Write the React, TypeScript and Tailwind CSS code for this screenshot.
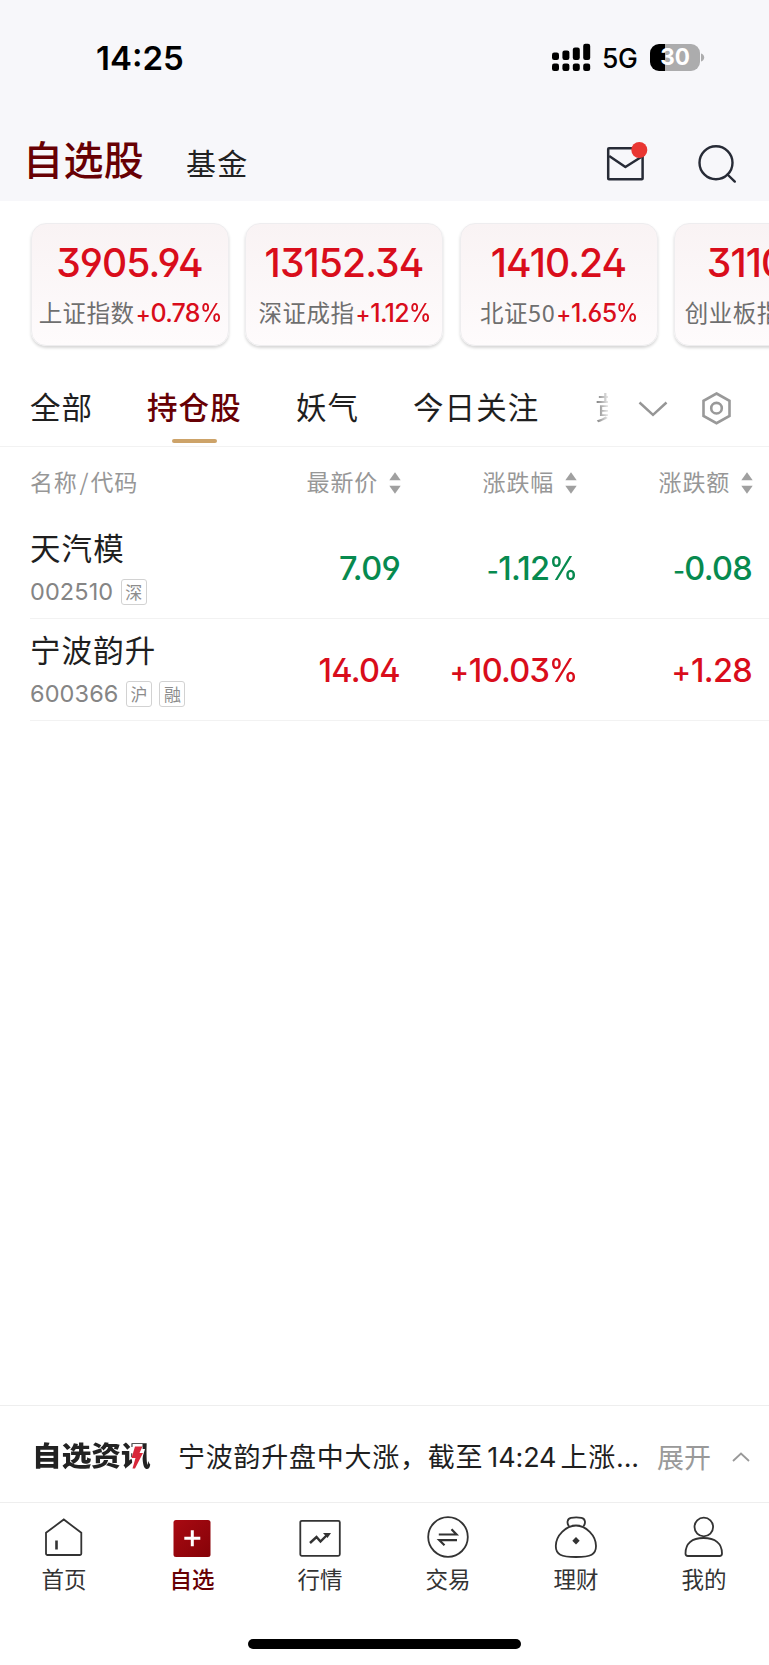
import React from "react";

const indexes = [
  { name: "上证指数", value: "3905.94", change: "+0.78%" },
  { name: "深证成指", value: "13152.34", change: "+1.12%" },
  { name: "北证50", value: "1410.24", change: "+1.65%" },
  { name: "创业板指", value: "3110.57", change: "+1.98%" },
];

const stocks = [
  { name: "天汽模", code: "002510", tags: ["深"], price: "7.09", percent: "-1.12%", diff: "-0.08", up: false },
  { name: "宁波韵升", code: "600366", tags: ["沪", "融"], price: "14.04", percent: "+10.03%", diff: "+1.28", up: true },
];

// rounded digits with a flat-top three and open four / six / nine
const digits = "font-['Inter'] [font-feature-settings:'ss01','cv09']";

// sign and percent mark are set a little narrower than the number itself
function Figure({ text }: { text: string }) {
  const sign = /^[+-]/.test(text) ? text[0] : "";
  const percent = text.endsWith("%") ? "%" : "";
  const number = text.slice(sign.length, text.length - percent.length);
  return (
    <>
      {sign === "-" && <span className="text-[0.8em]">-</span>}
      {sign === "+" && <span className="text-[0.9em] mr-[0.02em]">+</span>}
      {number}
      {percent && <span className="inline-block w-[0.82em] origin-left scale-x-[0.9]">{percent}</span>}
    </>
  );
}

function SortIcon() {
  return (
    <svg className="ml-[11px] mt-[2px] shrink-0" width="12" height="22" viewBox="0 0 12 22" fill="#a0a0a0">
      <path d="M6 0.3L11.7 8.3H0.3z" />
      <path d="M6 21.7L11.7 13.7H0.3z" />
    </svg>
  );
}

function StatusBar() {
  return (
    <div className="h-[116px] flex justify-between pl-[96px] pr-[64px]">
      <div className="mt-[38px] h-10 leading-10 text-[33px] font-semibold text-black font-['Inter']">14:25</div>
      <div className="mt-[43px] h-[29px] flex items-center">
        <svg width="39" height="29" viewBox="0 0 39 29" fill="#000">
          <rect x="0" y="9.5" width="7" height="7.5" rx="2.2" />
          <rect x="10.4" y="7.5" width="7" height="9.5" rx="2.2" />
          <rect x="20.8" y="4.5" width="7" height="12.5" rx="2.2" />
          <rect x="31.2" y="0.8" width="7" height="16.2" rx="2.2" />
          <rect x="0" y="20.5" width="7" height="7.5" rx="2.2" />
          <rect x="10.4" y="20.5" width="7" height="7.5" rx="2.2" />
          <rect x="20.8" y="20.5" width="7" height="7.5" rx="2.2" />
          <rect x="31.2" y="20.5" width="7" height="7.5" rx="2.2" />
        </svg>
        <span className="ml-[11px] w-[38px] pt-[1px] leading-7 text-[26.5px] font-medium text-black font-['Inter'] tracking-[-0.3px]">5G</span>
        <div className="ml-[10px] w-[50px] h-[27px] rounded-[9px] flex items-center justify-center bg-[linear-gradient(to_right,#000_31%,#acacad_31%)]">
          <span className="text-[22.5px] leading-none font-bold text-white font-['Inter']">30</span>
        </div>
        <svg className="ml-[1px]" width="4" height="9" viewBox="0 0 4 9" fill="#acacad">
          <path d="M0 0.5C2 1 3.2 2.6 3.2 4.5S2 8 0 8.5z" />
        </svg>
      </div>
    </div>
  );
}

function Header() {
  return (
    <header className="h-[201px] bg-[#f7f7fa]">
      <StatusBar />
      <div className="h-[85px] flex items-start pl-[23px] whitespace-nowrap">
        <h1 className="mt-[13px] w-[122px] leading-[58px] text-[40px] font-medium text-[#670004] tracking-[0.4px]">自选股</h1>
        <span className="mt-[24px] ml-[41px] leading-[44px] text-[30px] text-[#222] tracking-[1.2px]">基金</span>
        <svg className="mt-[24px] ml-auto overflow-visible" width="44" height="44" viewBox="0 0 44 44" fill="none" stroke="#272b36" strokeWidth="2.5" strokeLinejoin="round">
          <rect x="6.2" y="8.2" width="34.4" height="31" rx="0.8" />
          <path d="M7.2 16L23.4 27L40 16.5" />
          <circle cx="37.3" cy="10" r="8" fill="#e93632" stroke="none" />
        </svg>
        <svg className="mt-[26px] ml-[50px] mr-[29px]" width="44" height="44" viewBox="0 0 44 44" fill="none" stroke="#272b36" strokeWidth="2.4" strokeLinecap="round">
          <circle cx="20" cy="20.7" r="16.5" />
          <path d="M31.5 32.5L38.8 39.6" />
        </svg>
      </div>
    </header>
  );
}

function IndexCards() {
  return (
    <div className="h-[167px] pt-[22px] pl-[30.5px] flex gap-[16.5px] overflow-hidden">
      {indexes.map((item) => (
        <div
          key={item.name}
          className="w-[198px] h-[123px] shrink-0 rounded-[15px] border border-[#eeedef] bg-linear-to-b from-[#f9f3f4] to-[#fefbfc] shadow-[0_2px_3px_rgba(0,0,0,0.16)] text-center whitespace-nowrap"
        >
          <div className={`${digits} mt-[13px] h-[52px] leading-[52px] text-[39px] font-medium text-[#d90d1b] tracking-[-0.9px]`}>{item.value}</div>
          <div className="mt-[6px] h-9 leading-9 flex justify-center items-center text-[23.5px] text-[#6f6f6f] tracking-[0.5px]">
            <span className="-mt-[3px]">{item.name}</span>
            <span className={`${digits} ml-[1px] mt-[1px] text-[25px] font-medium text-[#d90d1b] tracking-[-0.7px]`}>
              <Figure text={item.change} />
            </span>
          </div>
        </div>
      ))}
    </div>
  );
}

function Tabs() {
  return (
    <div className="h-[79px] border-b border-[#f2f2f2] pl-[30px] flex items-start text-[30.5px] leading-[44px] text-[#1f1f1f] tracking-[1.1px] whitespace-nowrap">
      <span className="mt-[16px] w-[117px]">全部</span>
      <div className="mt-[16px] w-[149px]">
        <div className="font-medium text-[#670004]">持仓股</div>
        <div className="ml-[25px] mt-[11px] w-[45px] h-1 rounded-full bg-[#cda369]" />
      </div>
      <span className="mt-[16px] w-[117px]">妖气</span>
      <span className="mt-[16px] w-[182px]">今日关注</span>
      <span className="mt-[16px] w-[13px] overflow-hidden text-transparent bg-clip-text bg-linear-to-r from-[#777] to-[#e8e8e8]">黄金</span>
      <svg className="mt-[32px] ml-[30px]" width="30" height="18" viewBox="0 0 30 18" fill="none" stroke="#969696" strokeWidth="2.5">
        <path d="M1.5 2.5L15 14.8L28.5 2.5" />
      </svg>
      <svg className="mt-[23px] ml-[33px]" width="32" height="34" viewBox="0 0 32 34" fill="none" stroke="#999" strokeWidth="2.6">
        <path d="M15.5 2.5L28.5 9.8V25L15.5 32.2L2.5 25V9.8z" />
        <circle cx="15.5" cy="17.2" r="5.3" />
      </svg>
    </div>
  );
}

function StockTable() {
  return (
    <div className="h-[958px]">
      <div className="h-[69px] mb-[1px] grid grid-cols-[371px_176px_176px] pl-[30px] items-center text-[23px] text-[#979797] tracking-[0.8px]">
        <div className="flex justify-between items-center">
          <span>名称<span className="ml-[2px] mr-[1px]">/</span>代码</span>
          <span className="flex items-center">最新价<SortIcon /></span>
        </div>
        <div className="flex justify-end items-center">涨跌幅<SortIcon /></div>
        <div className="flex justify-end items-center">涨跌额<SortIcon /></div>
      </div>
      {stocks.map((s) => (
        <div
          key={s.code}
          className="ml-[30px] h-[102px] border-b border-[#f2f2f2] grid grid-cols-[200px_170px_176px_176px] items-center"
        >
          <div className="mt-[1px]">
            <div className="leading-[44px] text-[30.5px] text-[#1f1f1f] tracking-[1.1px]">{s.name}</div>
            <div className="h-[42px] pt-[3px] flex items-center">
              <span className="font-['Inter'] text-[23.5px] text-[#858585] tracking-[0.1px]">{s.code}</span>
              {s.tags.map((t) => (
                <span key={t} className="ml-[7.500px] w-[26px] h-[26px] rounded-[3px] border border-[#d2d2d2] flex items-center justify-center text-[17px] leading-none text-[#8c8c8c] pb-[1px]">{t}</span>
              ))}
            </div>
          </div>
          {[s.price, s.percent, s.diff].map((v) => (
            <div
              key={v}
              className={`${digits} pt-[3px] text-right text-[32.5px] font-medium tracking-[-0.7px] ${s.up ? "text-[#d90d1b]" : "text-[#078a4f]"}`}
            >
              <Figure text={v} />
            </div>
          ))}
        </div>
      ))}
    </div>
  );
}

function NewsBar() {
  return (
    <div className="h-[98px] border-y border-[#eeeeee] pl-[32px] flex items-center whitespace-nowrap">
      <div className="relative w-[146px] pt-[2px]">
        <div className="text-[29.7px] leading-[44px] font-black text-[#222] scale-y-[0.93]">自选资讯</div>
        <svg className="absolute left-[98px] top-[10px]" width="15" height="30" viewBox="0 0 15 30">
          <path d="M2.5 3H12.500V8H15L9 28H2z" fill="#fff" />
          <path d="M5 5.500H12.500L9.500 12H13L5 27.500H2.500L5.500 17H1.500z" fill="#d8283a" />
        </svg>
      </div>
      <span className="w-[479px] pt-[5px] text-[27px] leading-10 text-[#1f1f1f] tracking-[0.75px]">
        宁波韵升盘中大涨，截至<span className="font-['Inter'] mx-[4px] tracking-[-0.1px]">14:24</span>上涨<span className="font-['Inter'] tracking-[-0.1px]">...</span>
      </span>
      <span className="pt-[5px] text-[27px] leading-10 text-[#999]">展开</span>
      <svg className="ml-[20px] mt-[5px]" width="20" height="12" viewBox="0 0 20 12" fill="none" stroke="#999" strokeWidth="1.8">
        <path d="M2 10L10 2.5L18 10" />
      </svg>
    </div>
  );
}

const navItems = [
  {
    label: "首页",
    icon: (
      <>
        <path d="M4 16.8L21.8 3.5L39.3 16.8V37.5a1.5 1.5 0 0 1-1.5 1.5H5.5a1.5 1.5 0 0 1-1.5-1.5z" />
        <path d="M14.5 24.5V33.5" strokeWidth="2.6" />
      </>
    ),
  },
  {
    label: "自选",
    active: true,
    icon: (
      <>
        <defs>
          <linearGradient id="nav-red" x1="0" y1="0" x2="1" y2="1">
            <stop offset="0" stopColor="#a90a12" />
            <stop offset="1" stopColor="#850208" />
          </linearGradient>
        </defs>
        <rect x="3.5" y="4" width="37" height="37" rx="2.5" fill="url(#nav-red)" stroke="none" />
        <path d="M22.3 14.3V30.3M14.3 22.3H30.3" stroke="#fff" strokeWidth="3" />
      </>
    ),
  },
  {
    label: "行情",
    icon: (
      <>
        <rect x="2.3" y="4.8" width="39.5" height="35" rx="1.5" />
        <path d="M12 27L18.5 21L22.5 25.5L29.5 18.5" strokeWidth="2.4" />
        <path d="M25 17H33L29.5 22z" fill="#333" stroke="none" />
      </>
    ),
  },
  {
    label: "交易",
    icon: (
      <>
        <circle cx="22" cy="21" r="19.8" />
        <path d="M12.8 18.5H30.5L25.5 13.2M31 24.2H13.3L18.5 29.3" strokeWidth="2.2" />
      </>
    ),
  },
  {
    label: "理财",
    icon: (
      <>
        <path d="M15.2 10.5C12.5 7.5 13 2.5 17 1.8C20.5 1.2 24 1.2 27.5 1.8C31.5 2.5 32 7.5 29.3 10.5" />
        <path d="M22 9.5C32 9.5 42 19.5 42 30C42 38.5 37 41 22 41S1.8 38.5 1.8 30C1.8 19.5 12 9.5 22 9.5z" />
        <path d="M22 21L25.7 24.7L22 28.4L18.3 24.7z" fill="#333" stroke="none" />
      </>
    ),
  },
  {
    label: "我的",
    icon: (
      <>
        <circle cx="21.8" cy="11" r="9.3" />
        <path d="M3.5 37.5C3.5 27.5 10 22 21.5 22S40 27.5 40 37.5C40 39 39 40 37.5 40H6C4.5 40 3.5 39 3.5 37.5z" />
      </>
    ),
  },
];

function BottomNav() {
  return (
    <nav className="h-[136px] w-[768px] grid grid-cols-6">
      {navItems.map((n) => (
        <div key={n.label} className="flex flex-col items-center">
          <svg className="mt-[13px]" width="44" height="44" viewBox="0 0 44 44" fill="none" stroke="#333" strokeWidth="1.8">
            {n.icon}
          </svg>
          <span
            className={
              n.active
                ? "leading-9 text-[22.5px] font-medium text-[#670004]"
                : "leading-9 text-[22.5px] text-[#333]"
            }
          >
            {n.label}
          </span>
        </div>
      ))}
    </nav>
  );
}

export default function App() {
  return (
    <div className="w-[769px] h-[1665px] flex flex-col overflow-hidden bg-white font-['Noto_Sans_CJK_SC',sans-serif]">
      <Header />
      <IndexCards />
      <Tabs />
      <StockTable />
      <NewsBar />
      <BottomNav />
      <div className="mx-auto w-[273px] h-[10px] rounded-full bg-black" />
    </div>
  );
}
